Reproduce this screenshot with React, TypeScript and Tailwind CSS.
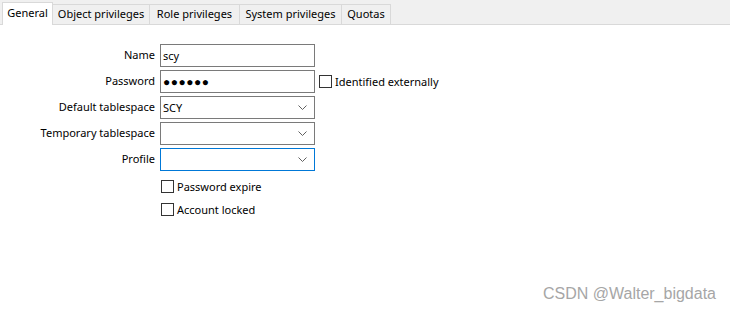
import { FC } from 'react';

const tabs = [
    { label: 'General', w: 'w-[51px]', active: true },
    { label: 'Object privileges', w: 'w-[97px]' },
    { label: 'Role privileges', w: 'w-[90px]' },
    { label: 'System privileges', w: 'w-[102px]' },
    { label: 'Quotas', w: 'w-[49px]' },
];

const Chevron: FC = () => (
    <svg width="9" height="6" viewBox="0 0 9 6" className="mr-[7px]">
        <path d="M0.5 0.5 L4.5 4.5 L8.5 0.5" fill="none" stroke="#606060" strokeWidth="1" />
    </svg>
);

const Checkbox: FC<{ label: string }> = ({ label }) => (
    <div className="flex items-center h-[13px]">
        <div className="w-[13px] h-[13px] border border-[#333] bg-white" />
        <span className="ml-[3px] leading-none">{label}</span>
    </div>
);

const Field: FC<{ label: string; value?: string; combo?: boolean; focused?: boolean; secret?: boolean; extra?: React.ReactNode }> = ({
    label,
    value,
    combo,
    focused,
    secret,
    extra,
}) => (
    <div className="flex items-center h-[23px]">
        <div className="w-[156px] text-right pr-[1px]">{label}</div>
        <div
            className={`ml-[4px] w-[155px] h-[23px] flex items-center justify-between bg-white border ${
                focused ? 'border-[#0078d7]' : 'border-[#7a7a7a]'
            }`}
        >
            <span className={`pl-[2px] leading-none ${secret ? 'text-[12px] tracking-[0.5px]' : ''}`}>{value}</span>
            {combo && <Chevron />}
        </div>
        {extra}
    </div>
);

export default function App() {
    return (
        <div className="w-[730px] h-[314px] bg-white relative font-['Noto_Sans',sans-serif] text-[11px] text-black overflow-hidden">
            {/* Tab strip */}
            <div className="flex items-end h-[25px] bg-[#f0f0f0] border-b border-[#d9d9d9] pl-[2px]">
                {tabs.map((t) =>
                    t.active ? (
                        <div
                            key={t.label}
                            className={`${t.w} h-[23px] -mb-px bg-white border border-b-0 border-[#d9d9d9] flex items-center justify-center pb-[1px]`}
                        >
                            {t.label}
                        </div>
                    ) : (
                        <div
                            key={t.label}
                            className={`${t.w} h-[20px] border-t border-r border-[#d9d9d9] flex items-center justify-center`}
                        >
                            {t.label}
                        </div>
                    )
                )}
            </div>

            {/* Form */}
            <div className="flex flex-col gap-[3px] mt-[19px]">
                <Field label="Name" value="scy" />
                <Field
                    label="Password"
                    value="●●●●●●"
                    secret
                    extra={
                        <div className="ml-[4px]">
                            <Checkbox label="Identified externally" />
                        </div>
                    }
                />
                <Field label="Default tablespace" value="SCY" combo />
                <Field label="Temporary tablespace" combo />
                <Field label="Profile" combo focused />
            </div>

            <div className="flex flex-col gap-[10px] mt-[9px] ml-[161px]">
                <Checkbox label="Password expire" />
                <Checkbox label="Account locked" />
            </div>

            {/* Watermark */}
            <div className="absolute right-[14px] bottom-[8px] font-['Liberation_Sans',sans-serif] text-[16px] text-[#a6a6a6]">
                CSDN @Walter_bigdata
            </div>
        </div>
    );
}
